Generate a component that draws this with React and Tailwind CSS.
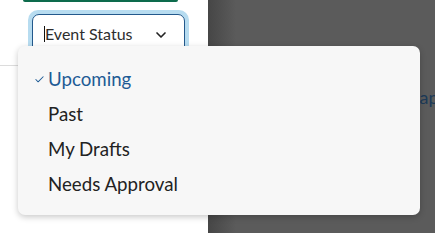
import { Check, ChevronDown } from 'lucide-react';

const items = ['Upcoming', 'Past', 'My Drafts', 'Needs Approval'];

function App() {
  const selected = 'Upcoming';

  return (
    <div className="relative flex w-[435px] h-[233px] overflow-hidden font-['Lato','Noto_Sans',sans-serif] bg-white">
      {/* panneau gauche */}
      <div className="w-[208px] shrink-0 h-full bg-white flex flex-col">
        <div className="ml-[23px] w-[155px] h-[2px] bg-[#0d6b4c] rounded-b-[2px]" />
        <div className="ml-[28px] mt-[8px] w-[161px] h-[46px] rounded-[10px] bg-[#b7dcf0] p-[4px]">
          <div className="h-[44px] rounded-[7px] border-[1.5px] border-[#23598c] bg-white flex items-start pt-[10px] pl-[11px] pr-[15px]">
            <span className="w-[1px] h-[16px] bg-[#111] mt-[1px]" />
            <span className="text-[16px] leading-[18px] text-[#2e2e2e] flex-1">Event Status</span>
            <ChevronDown size={16} strokeWidth={2.5} className="text-[#222] mt-[2px]" />
          </div>
        </div>
        <div className="mt-[9px] h-[1px] bg-[#dcdcdc]" />
      </div>

      {/* zone sombre */}
      <div className="flex-1 h-full bg-[linear-gradient(to_right,#464646,#5b5b5b_28px)]">
        <div className="ml-[195px] mt-[86px] text-[18px] leading-[22px] text-[#1c3a58] whitespace-nowrap">Map</div>
      </div>

      {/* menu déroulant */}
      <div className="absolute left-[18px] top-[46px] w-[402px] h-[169px] bg-[#f7f7f7] rounded-[7px] shadow-[0_2px_6px_rgba(0,0,0,0.22)] pt-[16px] pl-[12px]">
        {items.map((item) => (
          <div
            key={item}
            className={`flex items-center h-[35px] text-[18.7px] ${item === selected ? 'text-[#1e5b95]' : 'text-[#222]'}`}
          >
            <span className="w-[18px] flex justify-center">
              {item === selected && <Check size={11} strokeWidth={2.2} className="text-[#1e5b95]" />}
            </span>
            <span className="leading-[35px]">{item}</span>
          </div>
        ))}
      </div>
    </div>
  );
}

export default App;
